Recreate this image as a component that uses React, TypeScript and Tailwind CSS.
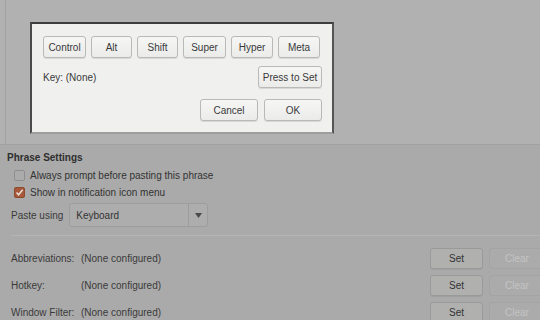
import React from "react";

const font = { fontFamily: '"Liberation Sans", Arial, sans-serif' };

function Btn({ children, className = "" }: { children: React.ReactNode; className?: string }) {
  return (
    <div
      className={`flex items-center justify-center rounded-[3px] border border-[#b9b9b6] bg-gradient-to-b from-[#f6f6f5] to-[#ebebea] text-[10px] text-[#3a3a3a] shadow-[0_1px_0_#d8d8d6] ${className}`}
    >
      {children}
    </div>
  );
}

function RowBtn({ children, disabled = false }: { children: React.ReactNode; disabled?: boolean }) {
  return (
    <div
      className={`flex h-[21px] items-center justify-center border text-[10px] ${
        disabled
          ? "w-[51px] rounded-l-[3px] border-r-0 border-[#a4a4a4] bg-[#ababab] pl-[4px] text-[#c4c4c4]"
          : "w-[53px] rounded-[3px] border-[#9a9a9a] bg-[#b0b0af] text-[#333333] shadow-[0_1px_0_#a0a0a0]"
      }`}
    >
      {children}
    </div>
  );
}

export default function App() {
  const mods = [
    ["Control", "w-[43px]"],
    ["Alt", "w-[41px]"],
    ["Shift", "w-[41px]"],
    ["Super", "w-[43px]"],
    ["Hyper", "w-[42px]"],
    ["Meta", "w-[42px]"],
  ];
  return (
    <div style={font} className="flex h-[320px] w-[540px] flex-col overflow-hidden bg-[#aaaaaa] text-[#333333]">
      {/* top framed area with modal dialog */}
      <div className="h-[145px] shrink-0 border-b border-[#a1a1a1] bg-[#b1b1b1] pl-[5px]">
        <div className="h-full border-l border-[#a3a3a3] pl-[24px] pt-[22px]">
          <div className="flex h-[112px] w-[304px] flex-col border-l-2 border-r-2 border-t-2 border-b-[2px] border-l-[#4a4a4a] border-r-[#555555] border-t-[#3e3e3e] border-b-[#9d9d9d] bg-[#f0f0ef] pl-[11px] pr-[10px] pt-[12px]">
            <div className="flex gap-[5px]">
              {mods.map(([m, w]) => (
                <Btn key={m} className={`h-[22px] ${w}`}>
                  {m}
                </Btn>
              ))}
            </div>
            <div className="mt-[8px] flex h-[22px] items-center justify-between">
              <span className="text-[10px] text-[#3a3a3a]">Key: (None)</span>
              <Btn className="h-[22px] w-[64px]">Press to Set</Btn>
            </div>
            <div className="mt-[11px] flex justify-end gap-[6px]">
              <Btn className="h-[22px] w-[58px]">Cancel</Btn>
              <Btn className="h-[22px] w-[58px]">OK</Btn>
            </div>
          </div>
        </div>
      </div>

      {/* Phrase settings */}
      <div className="flex flex-col pl-[7px] pt-[5px]">
        <div className="flex h-[14px] items-center text-[10px] font-bold text-[#2f2f2f]">Phrase Settings</div>
        <div className="mt-[4px] flex h-[14px] items-center pl-[7px]">
          <div className="h-[11px] w-[11px] rounded-[2px] border border-[#8e8e8e] bg-[#ababab]" />
          <span className="ml-[5px] text-[10px] text-[#333]">Always prompt before pasting this phrase</span>
        </div>
        <div className="mt-[3px] flex h-[14px] items-center pl-[7px]">
          <div className="flex h-[11px] w-[11px] items-center justify-center rounded-[2px] border border-[#8e4a2c] bg-[#a8583a]">
            <svg width="9" height="9" viewBox="0 0 9 9">
              <path d="M1.5 4.5 L3.6 6.8 L7.6 1.8" stroke="#e8e0d8" strokeWidth="1.5" fill="none" />
            </svg>
          </div>
          <span className="ml-[5px] text-[10px] text-[#333]">Show in notification icon menu</span>
        </div>
        <div className="mt-[4px] flex h-[24px] items-center pl-[4px]">
          <span className="text-[10px] text-[#3a3a3a]">Paste using</span>
          <div className="ml-[6px] flex h-[24px] w-[139px] items-center rounded-[3px] border border-[#9d9d9d] bg-[#adadad]">
            <span className="flex-1 pl-[6px] text-[10px] text-[#333]">Keyboard</span>
            <div className="h-full w-px bg-[#9c9c9c]" />
            <div className="flex w-[18px] items-center justify-center">
              <svg width="7" height="5" viewBox="0 0 7 5">
                <path d="M0 0 H7 L3.5 5 Z" fill="#4a4a4a" />
              </svg>
            </div>
          </div>
        </div>
      </div>
      <div className="ml-[11px] mt-[8px] h-px shrink-0 bg-[#b4b4b4]" />

      {/* rows */}
      <div className="mt-[12px] flex flex-col gap-[6px] pl-[11px]">
        {["Abbreviations:", "Hotkey:", "Window Filter:"].map((label) => (
          <div key={label} className="flex h-[21px] shrink-0 items-center">
            <span className="w-[70px] text-[10px] text-[#3a3a3a]">{label}</span>
            <span className="text-[10px] text-[#3a3a3a]">(None configured)</span>
            <div className="ml-auto flex gap-[6px]">
              <RowBtn>Set</RowBtn>
              <RowBtn disabled>Clear</RowBtn>
            </div>
          </div>
        ))}
      </div>
    </div>
  );
}
